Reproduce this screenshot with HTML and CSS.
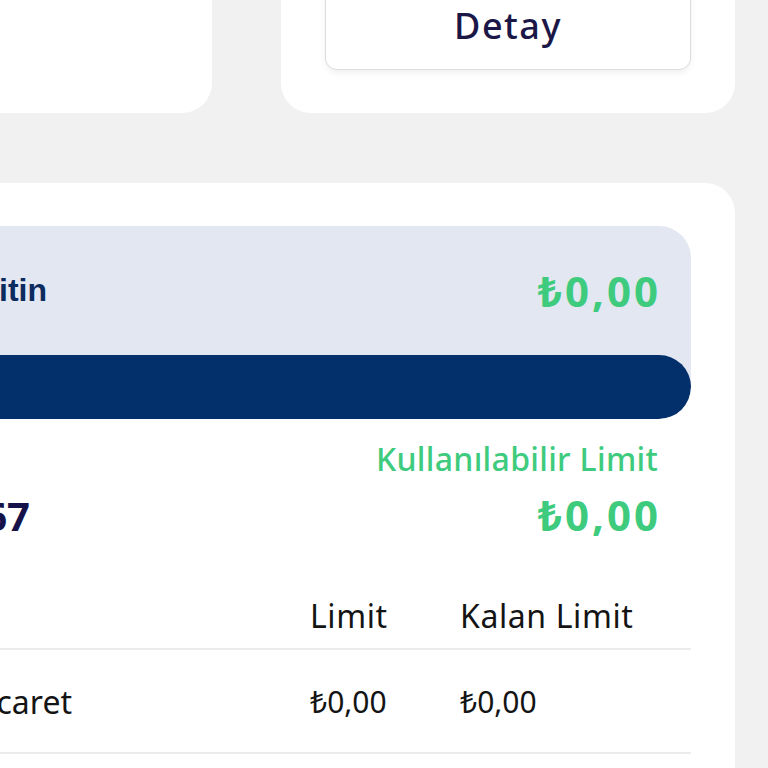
FILE: index.html
```html
<!DOCTYPE html>
<html lang="tr">
<head>
<meta charset="utf-8">
<link rel="stylesheet" href="styles.css">
</head>
<body>
<div class="top-row">
  <div class="card card-left"></div>
  <div class="card card-right">
    <button class="detail-btn">Detay</button>
  </div>
</div>

<div class="main-card">
  <div class="credit-box">
    <div class="credit-head">
      <div class="credit-title-wrap"><span class="credit-title">Kredi Limitin</span></div>
      <span class="credit-amount">₺0,00</span>
    </div>
    <div class="credit-bar"></div>
  </div>

  <div class="summary">
    <div class="summary-left">
      <span class="card-no">1234 4567</span>
    </div>
    <div class="summary-right">
      <div class="avail-label">Kullanılabilir Limit</div>
      <div class="avail-amount">₺0,00</div>
    </div>
  </div>

  <div class="limit-table">
    <div class="cell head"></div>
    <div class="cell head">Limit</div>
    <div class="cell head">Kalan Limit</div>
    <div class="cell name"><span>Ticaret</span></div>
    <div class="cell val">₺0,00</div>
    <div class="cell val">₺0,00</div>
  </div>
</div>
</body>
</html>
```

FILE: styles.css
```css
html, body {
  margin: 0;
  padding: 0;
}
body {
  background: #f1f1f1;
  font-family: "Noto Sans", "Open Sans", sans-serif;
  width: 768px;
  height: 768px;
  overflow: hidden;
}
.top-row {
  display: flex;
  gap: 69px;
  margin-top: -40px;
  margin-left: -60px;
}
.card {
  background: #fff;
  border-radius: 30px;
}
.card-left {
  width: 272px;
  height: 153px;
}
.card-right {
  width: 454px;
  box-sizing: border-box;
  padding: 20px 44px 43px 44px;
  display: flex;
}
.detail-btn {
  flex: 1;
  height: 90px;
  background: #fff;
  border: 1.5px solid #dddddd;
  border-radius: 12px;
  box-shadow: 0 3px 6px rgba(0, 0, 0, 0.06);
  font-family: inherit;
  font-size: 36px;
  font-weight: 500;
  letter-spacing: 1.5px;
  color: #1b1747;
  padding: 0;
}
.main-card {
  margin-top: 70px;
  margin-left: -60px;
  width: 795px;
  box-sizing: border-box;
  background: #fff;
  border-radius: 30px;
  padding: 43px 44px 40px 0;
}
.credit-box {
  background: #e3e7f1;
  border-radius: 0 32px 32px 0;
  overflow: hidden;
}
.credit-head {
  height: 129px;
  display: flex;
  align-items: center;
  justify-content: space-between;
  padding: 0 30px 0 0;
}
.credit-title-wrap {
  width: 107px;
  display: flex;
  justify-content: flex-end;
  white-space: nowrap;
}
.credit-title {
  font-family: "Liberation Sans", Arial, sans-serif;
  font-size: 32px;
  font-weight: 700;
  color: #0c2b5e;
}
.credit-amount {
  font-size: 42px;
  font-weight: 700;
  color: #3fcb7e;
  letter-spacing: 3px;
}
.credit-bar {
  height: 64px;
  background: #03306b;
  border-radius: 0 32px 32px 0;
}
.summary {
  display: flex;
  justify-content: space-between;
  align-items: flex-end;
  margin-top: 20px;
  padding-right: 30px;
}
.summary-left {
  width: 90px;
  height: 58px;
  display: flex;
  align-items: center;
  justify-content: flex-end;
  white-space: nowrap;
}
.card-no {
  font-size: 40px;
  font-weight: 700;
  color: #15124a;
}
.summary-right {
  text-align: right;
}
.avail-label {
  font-size: 32px;
  font-weight: 500;
  color: #3fcb7e;
  line-height: 40px;
  padding-right: 3px;
  letter-spacing: 0.3px;
}
.avail-amount {
  font-size: 42px;
  font-weight: 700;
  color: #3fcb7e;
  line-height: 58px;
  margin-top: 7px;
  letter-spacing: 3px;
}
.limit-table {
  display: grid;
  grid-template-columns: 370px 150px 1fr;
  margin-top: 38px;
}
.cell {
  display: flex;
  align-items: center;
  color: #141414;
  border-bottom: 2px solid #ececec;
  white-space: nowrap;
}
.head {
  height: 66px;
  font-size: 32px;
  letter-spacing: 0.6px;
}
.name {
  height: 102px;
  font-size: 32px;
  justify-content: flex-end;
  padding-right: 238px;
}
.val {
  height: 102px;
  font-size: 30px;
}
```
